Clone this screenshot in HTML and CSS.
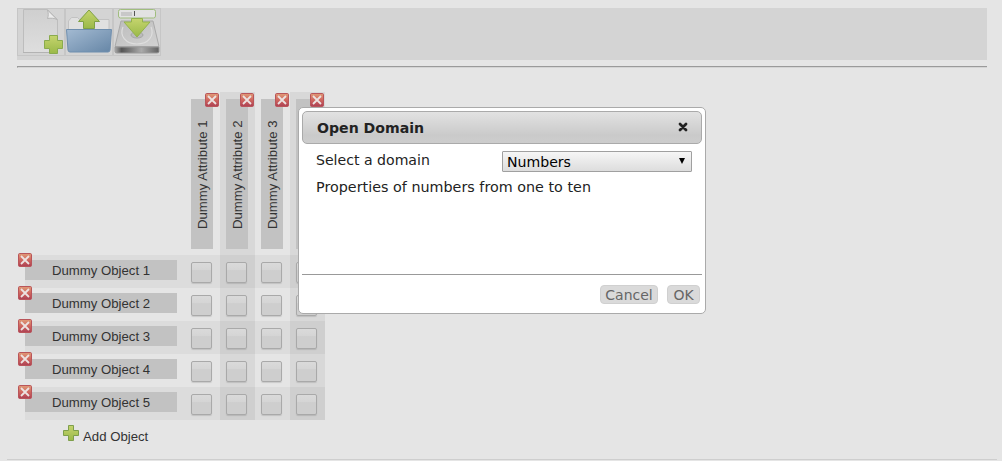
FILE: index.html
```html
<!DOCTYPE html>
<html lang="en">
<head>
<meta charset="utf-8">
<title>Open Domain</title>
<link rel="stylesheet" href="styles.css">
</head>
<body>
<svg class="defs" width="0" height="0">
  <defs>
    <linearGradient id="green" x1="0" y1="0" x2="0" y2="1"><stop offset="0" stop-color="#c5d46e"/><stop offset="1" stop-color="#9ab948"/></linearGradient>
    <linearGradient id="paper" x1="0" y1="0" x2="0" y2="1"><stop offset="0" stop-color="#cfcfcf"/><stop offset="1" stop-color="#dedede"/></linearGradient>
    <linearGradient id="blue" x1="0" y1="0" x2="1" y2="1"><stop offset="0" stop-color="#a3bad2"/><stop offset="1" stop-color="#6686a6"/></linearGradient>
    <linearGradient id="metal" x1="0" y1="0" x2="1" y2="1"><stop offset="0" stop-color="#bcbcbc"/><stop offset="1" stop-color="#d2d2d2"/></linearGradient>
    <linearGradient id="front"><stop offset="0" stop-color="#aaa"/><stop offset=".15" stop-color="#555"/><stop offset=".6" stop-color="#aaa"/><stop offset="1" stop-color="#606060"/></linearGradient>
    <linearGradient id="red" x1="0" y1="0" x2="0" y2="1"><stop offset="0" stop-color="#e09c78"/><stop offset=".5" stop-color="#d0665e"/><stop offset="1" stop-color="#ac4054"/></linearGradient>
    <symbol id="remove" viewBox="0 0 14 14"><rect x=".5" y=".5" width="13" height="13" rx="1.2" fill="url(#red)" stroke="#b9555a"/><path d="M3 3l8 8M11 3l-8 8" stroke="#ece2e1" stroke-width="1.8"/></symbol>
    <symbol id="plus" viewBox="0 0 16 16"><path d="M5.5.5h5v5h5v5h-5v5h-5v-5h-5v-5h5z" fill="url(#green)" stroke="#7e9f4b" stroke-linejoin="round"/></symbol>
  </defs>
</svg>
<header class="toolbar">
  <a class="tool"><svg width="46" height="46" viewBox="0 0 46 46">
    <path d="M5.5.5h24l10 10v33h-34z" fill="url(#paper)" stroke="#bdbdbd"/>
    <path d="M5 43.500h34" stroke="#b3b3b3"/>
    <path d="M29.500 1c1 3 1 6 0 8.500c3-.5 7-.5 9.500 1z" fill="#ececec" stroke="#b5b5b5"/>
    <path d="M31.500 26.500h8v5h5v8h-5v5h-8v-5h-5v-8h5z" fill="url(#green)" stroke="#8aab4e" stroke-linejoin="round"/>
  </svg></a>
  <a class="tool"><svg width="46" height="46" viewBox="0 0 46 46">
    <path d="M2.500 21v-9l3-3.500h6l2 2h29.500v11z" fill="#e0e0e0" stroke="#c2c2c2"/>
    <path d="M.5 20.500h45l-1.500 20.500q-.2 2-2 2h-38q-1.800 0-2-2z" fill="url(#blue)" stroke="#6f8eae"/>
    <path d="M17.500 19.500v-7h-5l10.500-11.500 10.500 11.500h-5v7z" fill="url(#green)" stroke="#7fa144" stroke-linejoin="round"/>
  </svg></a>
  <a class="tool"><svg width="46" height="46" viewBox="0 0 46 46">
    <path d="M7 12h32l6 25.500h-44z" fill="url(#metal)" stroke="#aaa"/>
    <path d="M1 38h44v4.500q0 1.500-2 1.500H3q-2 0-2-1.500z" fill="url(#front)" stroke="#9a9a9a"/>
    <path d="M9 18c-4 9 3 17 14 17s18-8 14-17" fill="none" stroke="#dedede" stroke-width="1.200"/>
    <ellipse cx="23" cy="26" rx="6" ry="3" fill="#bbb" stroke="#a5a5a5"/>
    <rect x="4.500" y=".5" width="37" height="8.500" rx="2" fill="#e2e2e2" stroke="#a0bd7e"/>
    <path d="M7 3h11v4h-11z" fill="#c8c8c8"/><path d="M20.500 2v5" stroke="#555"/>
    <path d="M17.500 9.500h11v3.500h7.500l-13 15-13-15h7.500z" fill="url(#green)" stroke="#93b34c" stroke-linejoin="round"/>
  </svg></a>
</header>
<hr class="rule">
<main class="context">
  <div class="row heads">
    <div class="corner"></div>
    <div class="col"><div class="attribute">Dummy Attribute 1</div><svg class="remove"><use href="#remove"/></svg></div>
    <div class="col"><div class="attribute">Dummy Attribute 2</div><svg class="remove"><use href="#remove"/></svg></div>
    <div class="col"><div class="attribute">Dummy Attribute 3</div><svg class="remove"><use href="#remove"/></svg></div>
    <div class="col"><div class="attribute">Dummy Attribute 4</div><svg class="remove"><use href="#remove"/></svg></div>
  </div>
  <div class="row"><div class="label"><div class="object">Dummy Object 1</div><svg class="remove"><use href="#remove"/></svg></div><div class="col"><i class="box"></i></div><div class="col"><i class="box"></i></div><div class="col"><i class="box"></i></div><div class="col"><i class="box"></i></div></div>
  <div class="row"><div class="label"><div class="object">Dummy Object 2</div><svg class="remove"><use href="#remove"/></svg></div><div class="col"><i class="box"></i></div><div class="col"><i class="box"></i></div><div class="col"><i class="box"></i></div><div class="col"><i class="box"></i></div></div>
  <div class="row"><div class="label"><div class="object">Dummy Object 3</div><svg class="remove"><use href="#remove"/></svg></div><div class="col"><i class="box"></i></div><div class="col"><i class="box"></i></div><div class="col"><i class="box"></i></div><div class="col"><i class="box"></i></div></div>
  <div class="row"><div class="label"><div class="object">Dummy Object 4</div><svg class="remove"><use href="#remove"/></svg></div><div class="col"><i class="box"></i></div><div class="col"><i class="box"></i></div><div class="col"><i class="box"></i></div><div class="col"><i class="box"></i></div></div>
  <div class="row"><div class="label"><div class="object">Dummy Object 5</div><svg class="remove"><use href="#remove"/></svg></div><div class="col"><i class="box"></i></div><div class="col"><i class="box"></i></div><div class="col"><i class="box"></i></div><div class="col"><i class="box"></i></div></div>
</main>
<div class="add"><svg width="16" height="16"><use href="#plus"/></svg><span class="add-text">Add Object</span></div>
<div class="bottom-rule"></div>
<section class="dialog">
  <div class="titlebar"><span class="title">Open Domain</span><svg width="10" height="10" viewBox="0 0 10 10"><path d="M2 2l6 6M8 2l-6 6" stroke="#222" stroke-width="2.800" stroke-linecap="round"/></svg></div>
  <div class="content">
    <div class="field"><span class="prompt">Select a domain</span><div class="select"><span>Numbers</span><svg width="6" height="6"><path d="M0 0h6l-3 6z"/></svg></div></div>
    <div class="description">Properties of numbers from one to ten</div>
  </div>
  <div class="actions"><button class="button cancel">Cancel</button><button class="button">OK</button></div>
</section>
</body>
</html>
```
FILE: styles.css
```css
* { box-sizing: border-box; }
body { margin: 0; padding: 8px 15px 0 17px; height: 461px; overflow: hidden; background: #e5e5e5; color: #333; font: 13.2px/20px "Liberation Sans", Arial, sans-serif; }
svg { display: block; }
.defs { position: absolute; }
.toolbar { display: flex; height: 52px; background: #d4d4d4; }
.tool { width: 48px; height: 48px; border: 1px solid #c6c6c6; }
.rule { margin: 6px 0 0; height: 2px; border: 0; border-top: 1px solid #9a9a9a; border-left: 1px solid #9a9a9a; border-bottom: 1px solid #d4d4d4; }
.context { width: 300px; margin: 24px 0 0 8px; }
.row { display: grid; grid-template-columns: 160px repeat(4, 35px); height: 33px; }
.row.heads { height: 163px; }
.row:nth-child(even) { background: #dcdcdc; }
.col { position: relative; padding: 7px 0 0 6px; }
.col:nth-child(odd) { background: rgba(0, 0, 0, .055); }
.attribute { width: 22px; height: 150px; padding-bottom: 1px; background: #c2c2c2; writing-mode: vertical-rl; transform: rotate(180deg); line-height: 24px; text-align: center; }
.label { position: relative; padding-top: 5px; }
.object { width: 152px; height: 20px; background: #c2c2c2; text-align: center; line-height: 21px; }
.remove { position: absolute; width: 14px; height: 14px; }
.label .remove { left: -7px; top: -2px; }
.col .remove { left: 20px; top: 1px; }
.box { display: block; width: 21px; height: 21px; border: 1px solid #a9a9a9; border-radius: 2px; background: linear-gradient(#dadada, #d5d5d5 35%, #cecece 40%, #cecece); box-shadow: 0 1px 1px rgba(0, 0, 0, .12); }
.add { display: flex; gap: 4px; padding: 5px 0 0 46px; }
.add-text { padding-top: 2px; }
.bottom-rule { margin: 12px -10px 0; height: 1px; background: #cecece; }
.dialog { position: absolute; left: 298px; top: 107px; width: 408px; height: 207px; padding: 3px; border: 1px solid #aaa; border-radius: 5px; background: #fff; color: #222; font: 14.3px/20px "DejaVu Sans", Verdana, sans-serif; display: flex; flex-direction: column; }
.titlebar { display: flex; justify-content: space-between; align-items: center; height: 33px; padding: 0 13px 1px 14px; border: 1px solid #aaa; border-radius: 5px; background: linear-gradient(#e2e2e2, #cacaca 75%, #cdcdcd); font-weight: bold; }
.title { padding-top: 2px; font-size: 14.1px; }
.prompt { font-size: 14.1px; }
.content { flex: 1; padding: 7px 10px 0 14px; }
.field { display: flex; justify-content: space-between; height: 21px; line-height: 18px; }
.select { display: flex; justify-content: space-between; width: 190px; height: 21px; padding: 0 6px 0 4px; border: 1px solid #a0a0a0; border-radius: 1px; background: linear-gradient(#f6f6f6, #ddd); color: #000; font-size: 14.1px; line-height: 20px; }
.select svg { margin-top: 6px; }
.description { margin-top: 5px; letter-spacing: .02px; }
.actions { display: flex; justify-content: flex-end; gap: 9px; height: 36px; padding: 10px 2px 0 0; border-top: 1px solid #999; }
.button { height: 19px; width: 33px; padding: 1px 0 0; border: 1px solid #d0d0d0; border-radius: 4px; background: #dadada; color: #666; font: inherit; font-size: 14px; line-height: 17px; }
.button.cancel { width: 58px; }
```
